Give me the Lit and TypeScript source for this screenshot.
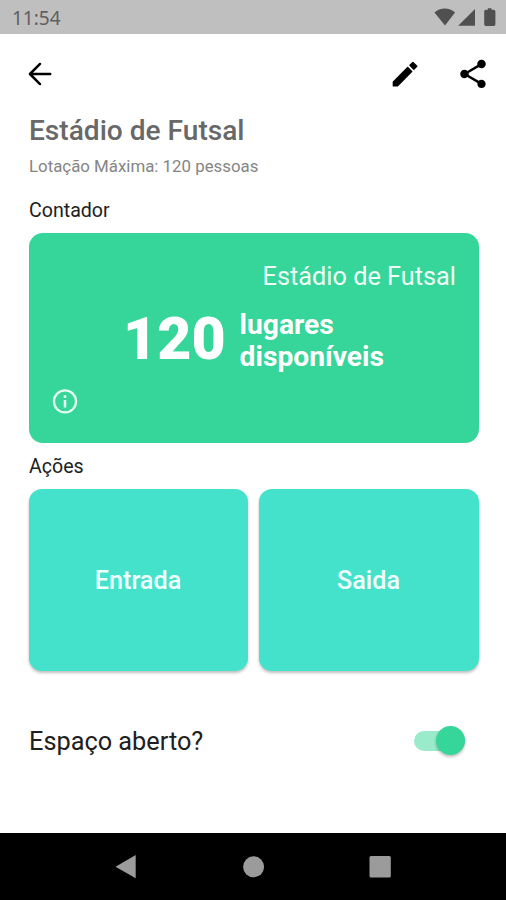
import { LitElement, html, css } from "lit";
import { customElement, property, state } from "lit/decorators.js";

@customElement("status-bar")
class StatusBar extends LitElement {
  static styles = css`
    :host {
      display: flex;
      align-items: center;
      justify-content: space-between;
      height: 34px;
      padding: 0 9px 0 12px;
      background: #bfbfbf;
      color: #606060;
      font: 400 19px/34px "Noto Sans", sans-serif;
    }
    .time { padding-top: 2px; }
    svg { display: block; fill: #505050; }
  `;
  render() {
    return html`
      <span class="time">11:54</span>
      <svg width="64" height="34" viewBox="0 0 64 34">
        <path d="M1.5 12.6C7 7 16.5 7 22 12.6L12 25.5Z" />
        <path d="M42 9V25.8H25.2Z" />
        <path d="M54.9 8.3h3.6v1.5h2.3q1.6 0 1.6 1.6v12.9q0 1.6-1.6 1.6h-8q-1.6 0-1.6-1.6V11.4q0-1.6 1.6-1.6h2.1Z" />
      </svg>
    `;
  }
}

@customElement("counter-card")
class CounterCard extends LitElement {
  @property() name = "";
  @property({ type: Number }) seats = 0;
  static styles = css`
    :host {
      display: flex;
      flex-direction: column;
      box-sizing: border-box;
      height: 210px;
      padding: 29px 23px 25px;
      border-radius: 14px;
      background: #36d599;
      color: #fff;
    }
    .name { align-self: flex-end; font-size: 25.3px; line-height: 30px; color: #effff6; }
    .row { display: flex; gap: 14px; align-items: center; margin: 16px 0 0 71px; height: 64px; }
    .num { font-size: 59px; line-height: 64px; font-weight: 900; margin-top: -2px; }
    .label { font-size: 28.2px; line-height: 32px; font-weight: 700; margin-top: 1px; }
    svg { display: block; margin: 12px 0 0 -4px; fill: #e6fff3; }
  `;
  render() {
    return html`
      <div class="name">${this.name}</div>
      <div class="row">
        <span class="num">${this.seats}</span>
        <span class="label">lugares<br />disponíveis</span>
      </div>
      <svg width="34" height="34" viewBox="-12 -12.3 24 24">
        <circle r="7.8" fill="none" stroke="#e6fff3" stroke-width="1.6" />
        <path d="M-.9-4.3h1.8v1.8h-1.8zM-.9-1h1.8v5.2h-1.8z" />
      </svg>
    `;
  }
}

@customElement("app-root")
class AppRoot extends LitElement {
  @state() private open = true;
  static styles = css`
    :host {
      display: flex;
      flex-direction: column;
      height: 900px;
      background: #fff;
      font-family: Roboto, sans-serif;
      color: #202020;
      white-space: nowrap;
    }
    svg { display: block; }
    .toolbar { display: flex; align-items: center; height: 79px; padding: 0 16px 0 23px; }
    .spacer { flex: 1; }
    .gap { width: 34px; }
    main { flex: 1; padding: 0 27px 0 29px; }
    h1 { margin: 0; font-size: 28.1px; line-height: 36px; font-weight: 500; color: #686868; }
    .sub { margin-top: 6px; font-size: 16.85px; line-height: 22px; color: #858585; }
    .section { font-size: 19.6px; line-height: 24px; }
    .first { margin: 22px 0 10px; }
    .second { margin: 12px 0 10px; }
    .actions { display: grid; grid-template-columns: 219px 220px; gap: 11px; }
    .action {
      height: 182px;
      padding: 2px 1px 0 0;
      border: 0;
      border-radius: 13px;
      background: #45e2cb;
      color: #effffc;
      font: 500 25.2px/30px Roboto, sans-serif;
      box-shadow: 0 2px 3px rgba(0, 0, 0, 0.25);
    }
    .open { display: flex; align-items: center; justify-content: space-between; height: 40px; margin-top: 50px; padding-right: 14px; font-size: 25.3px; }
    .track { width: 51px; height: 20px; margin-top: -1px; border-radius: 10px; background: #9aeacc; display: flex; align-items: center; }
    .track.on { justify-content: flex-end; }
    .thumb { width: 29px; height: 29px; border-radius: 50%; background: #36d599; box-shadow: 0 2px 3px rgba(0, 0, 0, 0.25); }
    nav { display: flex; height: 67px; background: #000; }
  `;
  render() {
    return html`
      <status-bar></status-bar>
      <div class="toolbar">
        <svg width="34" height="34" viewBox="0 0 24 24" fill="none" stroke="#000" stroke-width="1.75" stroke-linecap="round" stroke-linejoin="round">
          <path d="M19.2 12H5.1M12 4.9 4.9 12 12 19.1" />
        </svg>
        <span class="spacer"></span>
        <svg width="34" height="34" viewBox="0 0 24 24" stroke="#000" stroke-width="1" stroke-linejoin="round">
          <path d="M3.8 17.6 13.9 7.5 16.700 10.300 6.600 20.400H3.800ZM15.500 5.900 17.600 3.800 20.300 6.500 18.200 8.600Z" />
        </svg>
        <span class="gap"></span>
        <svg width="34" height="34" viewBox="0 0 24 24">
          <path d="M18 16.08c-.76 0-1.44.3-1.96.77L8.91 12.7c.05-.23.09-.46.09-.7s-.04-.47-.09-.7l7.05-4.11c.54.5 1.25.81 2.04.81 1.66 0 3-1.34 3-3s-1.34-3-3-3-3 1.34-3 3c0 .24.04.47.09.7L8.04 9.81C7.5 9.31 6.79 9 6 9c-1.66 0-3 1.34-3 3s1.34 3 3 3c.79 0 1.5-.31 2.04-.81l7.12 4.16c-.05.21-.08.43-.08.65 0 1.61 1.31 2.92 2.92 2.92s2.92-1.31 2.92-2.92-1.31-2.92-2.92-2.92z" />
        </svg>
      </div>
      <main>
        <h1>Estádio de Futsal</h1>
        <div class="sub">Lotação Máxima: 120 pessoas</div>
        <div class="section first">Contador</div>
        <counter-card name="Estádio de Futsal" .seats=${120}></counter-card>
        <div class="section second">Ações</div>
        <div class="actions">
          <button class="action">Entrada</button>
          <button class="action">Saida</button>
        </div>
        <div class="open">
          <span>Espaço aberto?</span>
          <div class="track ${this.open ? "on" : ""}" @click=${() => (this.open = !this.open)}>
            <div class="thumb"></div>
          </div>
        </div>
      </main>
      <nav>
        <svg width="506" height="67" viewBox="0 0 506 67" fill="#9b9b9b">
          <path d="M115.5 33.7 135.7 22V45.3Z" />
          <circle cx="253.6" cy="33.8" r="10.5" />
          <rect x="369.5" y="23" width="21.3" height="21.5" rx="1.5" />
        </svg>
      </nav>
    `;
  }
}
